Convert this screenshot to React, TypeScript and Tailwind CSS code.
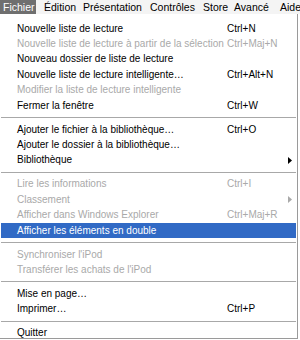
import React from 'react'

type Item = {
  label?: string
  shortcut?: string
  disabled?: boolean
  submenu?: boolean
  selected?: boolean
  sep?: boolean
}

const items: Item[] = [
  { label: 'Nouvelle liste de lecture', shortcut: 'Ctrl+N' },
  { label: 'Nouvelle liste de lecture à partir de la sélection', shortcut: 'Ctrl+Maj+N', disabled: true },
  { label: 'Nouveau dossier de liste de lecture' },
  { label: 'Nouvelle liste de lecture intelligente…', shortcut: 'Ctrl+Alt+N' },
  { label: 'Modifier la liste de lecture intelligente', disabled: true },
  { label: 'Fermer la fenêtre', shortcut: 'Ctrl+W' },
  { sep: true },
  { label: 'Ajouter le fichier à la bibliothèque…', shortcut: 'Ctrl+O' },
  { label: 'Ajouter le dossier à la bibliothèque…' },
  { label: 'Bibliothèque', submenu: true },
  { sep: true },
  { label: 'Lire les informations', shortcut: 'Ctrl+I', disabled: true },
  { label: 'Classement', submenu: true, disabled: true },
  { label: 'Afficher dans Windows Explorer', shortcut: 'Ctrl+Maj+R', disabled: true },
  { label: 'Afficher les éléments en double', selected: true },
  { sep: true },
  { label: "Synchroniser l'iPod", disabled: true },
  { label: "Transférer les achats de l'iPod", disabled: true },
  { sep: true },
  { label: 'Mise en page…' },
  { label: 'Imprimer…', shortcut: 'Ctrl+P' },
  { sep: true },
  { label: 'Quitter' },
]

function Arrow({ color }: { color: string }) {
  return (
    <svg width="4" height="7" viewBox="0 0 4 7">
      <path d="M0 0 L4 3.5 L0 7 Z" fill={color} />
    </svg>
  )
}

export default function App() {
  return (
    <div className="w-[300px] h-[340px] bg-white overflow-hidden text-[10px] leading-none text-black" style={{ fontFamily: '"Liberation Sans", Arial, sans-serif' }}>
      {/* barre de menus */}
      <div className="flex h-[14px] items-center bg-[#f4f4f4] whitespace-nowrap text-[10.5px] overflow-hidden">
        <div className="h-full w-[36px] shrink-0 flex items-center pl-[3px] bg-[#6f6f6f] text-white">Fichier</div>
        <div className="h-full w-[47px] shrink-0 flex items-center pl-[8px]">Édition</div>
        <div className="h-full w-[67px] shrink-0 flex items-center">Présentation</div>
        <div className="h-full w-[53px] shrink-0 flex items-center">Contrôles</div>
        <div className="h-full w-[31px] shrink-0 flex items-center">Store</div>
        <div className="h-full w-[46px] shrink-0 flex items-center">Avancé</div>
        <div className="h-full shrink-0 flex items-center">Aide</div>
      </div>

      {/* menu Fichier */}
      <div className="w-[298px] h-[325px] border-r border-b border-[#9a9a9a] pt-[7px] px-[1px]">
        {items.map((it, i) =>
          it.sep ? (
            <div key={i} className="h-[8.6px] flex items-center">
              <div className="w-full h-px bg-[#a8a8a8]" />
            </div>
          ) : (
            <div
              key={i}
              className={
                'h-[15.4px] flex items-center ' +
                (it.selected ? 'bg-[#316ac5] text-white ' : '') +
                (it.disabled ? 'text-[#a9a9a9]' : '')
              }
            >
              <span className="pl-[16px] w-[226px] whitespace-nowrap">{it.label}</span>
              <span className="flex-1 whitespace-nowrap">{it.shortcut}</span>
              {it.submenu && (
                <span className="pr-[4px]">
                  <Arrow color={it.disabled ? '#a9a9a9' : '#000'} />
                </span>
              )}
            </div>
          )
        )}
      </div>
    </div>
  )
}
